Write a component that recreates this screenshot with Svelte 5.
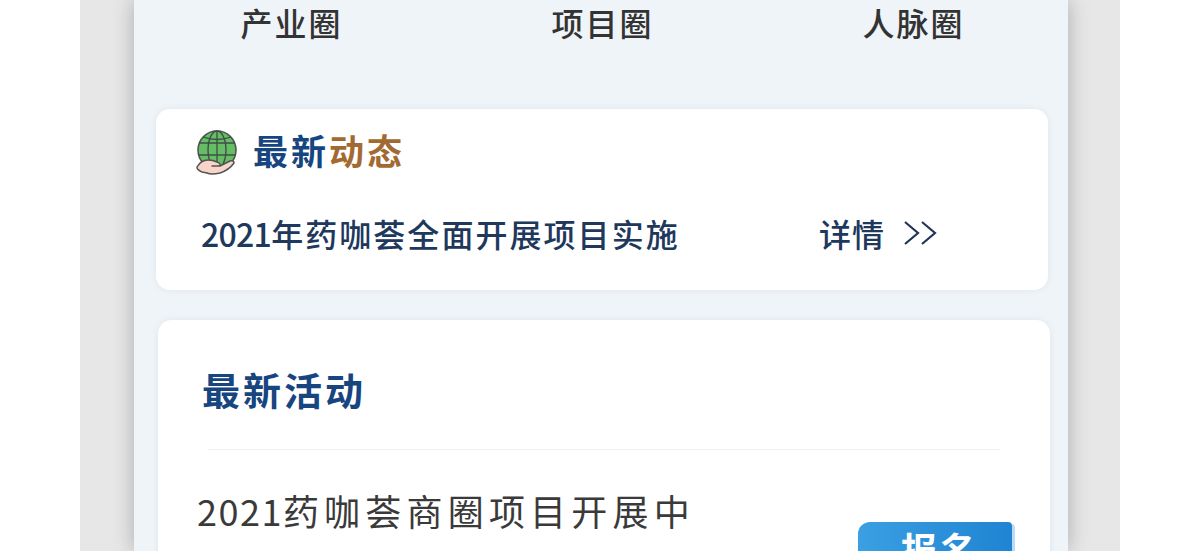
<script>
  const tabs = ['产业圈', '项目圈', '人脉圈'];
</script>

<div class="page">
  <div class="backdrop">
    <main class="phone">
      <nav class="tabs">
        {#each tabs as tab}
          <span class="tab">{tab}</span>
        {/each}
      </nav>

      <section class="card news">
        <h2 class="news-title">
          <svg class="globe" viewBox="0 0 42 46" width="42" height="46" aria-hidden="true">
            <circle cx="22" cy="20" r="19" fill="#66bd66" stroke="#4c5a50" stroke-width="1.6"/>
            <g fill="none" stroke="#3f4f45" stroke-width="1.3">
              <ellipse cx="22" cy="20" rx="9" ry="19"/>
              <path d="M22 1v38M4 13h36M3 25h38"/>
              <path d="M8 7q14 5 28 0"/>
            </g>
            <path d="M2 37q4-7 11-7 5 0 9 2 5 2 2 4l-7 0 8 0 10-5q4-1 4 2-5 7-14 10-9 2-13 0l-5-1q-5-2-5-5z" fill="#f9d4c8" stroke="#4f5552" stroke-width="1.5" stroke-linejoin="round"/>
          </svg>
          <span class="blue">最新</span><span class="brown">动态</span>
        </h2>
        <div class="news-row">
          <span class="headline"><span class="digits">2021</span>年药咖荟全面开展项目实施</span>
          <span class="detail">
            详情
            <svg viewBox="0 0 34 26" width="34" height="26" aria-hidden="true">
              <path d="M2 2l13 11L2 24M19 2l13 11-13 11" fill="none" stroke="#1e3557" stroke-width="2.2"/>
            </svg>
          </span>
        </div>
      </section>

      <section class="card activity">
        <h2 class="activity-title">最新活动</h2>
        <hr />
        <div class="activity-row">
          <p class="activity-name"><span class="digits-wide">2021</span>药咖荟商圈项目开展中</p>
          <button class="signup">报名</button>
        </div>
      </section>
    </main>
  </div>
</div>

<style>
  :global(body) {
    margin: 0;
    background: #fff;
    overflow: hidden;
  }
  .page {
    width: 1200px;
    height: 551px;
    padding: 0 80px;
    box-sizing: border-box;
    overflow: hidden;
    font-family: "Noto Sans CJK SC", "Liberation Sans", sans-serif;
  }
  .backdrop {
    height: 100%;
    padding: 0 52px 0 54px;
    background: #e7e7e7;
  }
  .phone {
    height: 100%;
    background: #eff4f8;
    box-shadow: 0 0 20px rgba(0, 0, 0, 0.26);
    padding: 0 20px 0 22px;
    overflow: hidden;
  }
  .tabs {
    display: grid;
    grid-template-columns: repeat(3, 311px);
    height: 109px;
    margin-left: -20px;
    align-items: start;
  }
  .tab {
    font-size: 32px;
    line-height: 44px;
    font-weight: 500;
    letter-spacing: 2px;
    color: #333;
    text-align: center;
  }
  .card {
    background: #fff;
    border-radius: 14px;
    box-shadow: 0 0 6px rgba(190, 205, 220, 0.35);
  }
  .news {
    height: 181px;
    padding: 18px 40px 0 40px;
    box-sizing: border-box;
  }
  .news-title {
    display: flex;
    align-items: center;
    margin: 0;
    font-size: 35px;
    line-height: 46px;
    font-weight: 700;
    letter-spacing: 3px;
  }
  .globe {
    margin-right: 16px;
    margin-left: -1px;
    transform: translateY(3px);
  }
  .blue {
    color: #17457f;
  }
  .brown {
    color: #a26a32;
  }
  .news-row {
    display: flex;
    align-items: center;
    justify-content: space-between;
    margin-top: 37px;
    padding: 0 71px 0 5px;
  }
  .headline {
    font-size: 32px;
    line-height: 46px;
    font-weight: 500;
    color: #20385c;
    letter-spacing: 2.05px;
  }
  .digits {
    letter-spacing: -0.7px;
  }
  .detail {
    display: flex;
    align-items: center;
    gap: 18px;
    font-size: 32px;
    line-height: 46px;
    font-weight: 500;
    color: #20385c;
    letter-spacing: 1px;
  }
  .activity {
    margin: 30px -2px 0 2px;
    height: 300px;
    padding: 44px 50px 0 44px;
    box-sizing: border-box;
  }
  .activity-title {
    margin: 0;
    font-size: 38px;
    line-height: 50px;
    font-weight: 700;
    letter-spacing: 3px;
    color: #17457f;
  }
  hr {
    border: 0;
    height: 1px;
    background: #eef1f4;
    margin: 35px 0 0 6px;
  }
  .activity-row {
    display: flex;
    justify-content: space-between;
    align-items: flex-start;
    margin-left: -5px;
    margin-right: -12px;
  }
  .activity-name {
    margin: 35px 0 0;
    font-size: 36px;
    line-height: 50px;
    font-weight: 400;
    letter-spacing: 5.2px;
    color: #3a3a3a;
  }
  .digits-wide {
    letter-spacing: 1.5px;
  }
  .signup {
    margin-top: 72px;
    width: 154px;
    height: 60px;
    border: 0;
    border-radius: 12px 4px 0 0;
    background: linear-gradient(90deg, #3b9fe2, #1f84d2);
    box-shadow: 3px 2px 0 #b9dcf2;
    color: #fff;
    font-family: inherit;
    font-size: 36px;
    font-weight: 700;
    letter-spacing: 3px;
    line-height: 40px;
    padding: 0 0 8px 10px;
  }
</style>
